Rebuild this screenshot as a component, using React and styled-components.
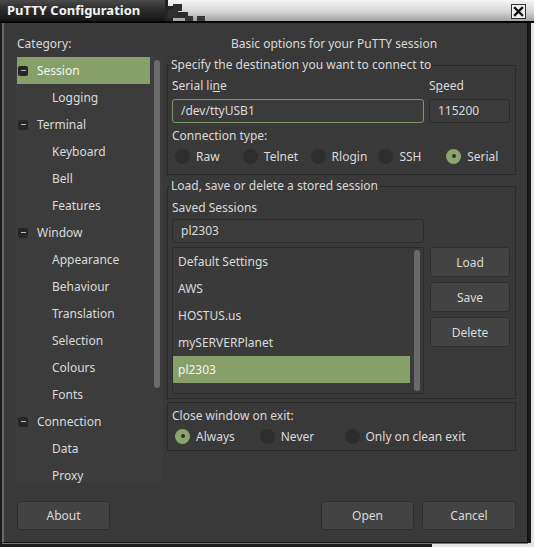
import styled, { createGlobalStyle } from "styled-components";

const GlobalStyle = createGlobalStyle`
  * { box-sizing: border-box; }
  html, body { margin: 0; padding: 0; background: #1e1e1e; }
  body {
    font-family: "Noto Sans", "DejaVu Sans", sans-serif;
    font-size: 12px;
    color: #dadada;
  }
`;

const treeItems = [
  { label: "Session", top: true, selected: true },
  { label: "Logging" },
  { label: "Terminal", top: true },
  { label: "Keyboard" },
  { label: "Bell" },
  { label: "Features" },
  { label: "Window", top: true },
  { label: "Appearance" },
  { label: "Behaviour" },
  { label: "Translation" },
  { label: "Selection" },
  { label: "Colours" },
  { label: "Fonts" },
  { label: "Connection", top: true },
  { label: "Data" },
  { label: "Proxy" },
];

const sessions = ["Default Settings", "AWS", "HOSTUS.us", "mySERVERPlanet", "pl2303"];

function Radio({ checked, label, span }) {
  return (
    <RadioItem $span={span}>
      <RadioDot $checked={checked} />
      <span>{label}</span>
    </RadioItem>
  );
}

function Checker() {
  return (
    <svg width="40" height="21" viewBox="0 0 40 21">
      <rect x="0" y="0" width="3" height="21" fill="#202020" />
      <rect x="0" y="6" width="8" height="15" fill="#262626" />
      <rect x="8" y="4" width="9" height="7" fill="#2e2e2e" />
      <rect x="3" y="10" width="10" height="8" fill="#303030" />
      <rect x="12" y="12" width="11" height="6" fill="#2a2a2a" />
      <rect x="20" y="16" width="8" height="5" fill="#333" />
      <rect x="32" y="16" width="8" height="5" fill="#383838" />
    </svg>
  );
}

function CloseIcon() {
  return (
    <svg width="15" height="15" viewBox="0 0 15 15">
      <rect x="0.5" y="0.5" width="14" height="14" fill="#f2f2f2" stroke="#333" />
      <path d="M4 4 L11 11 M11 4 L4 11" stroke="#111" strokeWidth="2.4" strokeLinecap="square" />
    </svg>
  );
}

export default function App() {
  return (
    <>
      <GlobalStyle />
      <Window>
        <TitleBar>
          <TitleTab>PuTTY Configuration</TitleTab>
          <Checker />
          <TitleFill>
            <CloseIcon />
          </TitleFill>
        </TitleBar>

        <Body>
          <Main>
            <LeftColumn>
              <Caption>
                Cate<u>g</u>ory:
              </Caption>
              <Tree>
                <TreeList>
                  {treeItems.map((item) => (
                    <TreeRow key={item.label} $top={item.top} $selected={item.selected}>
                      {item.top && <Expander />}
                      {item.label}
                    </TreeRow>
                  ))}
                </TreeList>
                <ScrollTrack $pad={3}>
                  <ScrollThumb style={{ height: 328 }} />
                </ScrollTrack>
              </Tree>
            </LeftColumn>

            <RightColumn>
              <Header>Basic options for your PuTTY session</Header>

              <Group>
                <Legend>Specify the destination you want to connect to</Legend>
                <FieldGrid>
                  <FieldLabel>
                    Serial li<u>n</u>e
                  </FieldLabel>
                  <FieldLabel>
                    S<u>p</u>eed
                  </FieldLabel>
                  <TextBox $focused>/dev/ttyUSB1</TextBox>
                  <TextBox>115200</TextBox>
                </FieldGrid>
                <FieldLabel $gap={4}>Connection type:</FieldLabel>
                <RadioRow $cols={5}>
                  <Radio label="Raw" />
                  <Radio label="Telnet" />
                  <Radio label="Rlogin" />
                  <Radio label="SSH" />
                  <Radio label="Serial" checked />
                </RadioRow>
              </Group>

              <Group $gapTop={3} $padBottom={4}>
                <Legend>Load, save or delete a stored session</Legend>
                <FieldLabel $gap={5}>Saved Sessions</FieldLabel>
                <SessionInput>pl2303</SessionInput>
                <SessionRow>
                  <ListBox>
                    <ListItems>
                      {sessions.map((s) => (
                        <ListItem key={s} $selected={s === "pl2303"}>
                          {s}
                        </ListItem>
                      ))}
                    </ListItems>
                    <ScrollTrack $pad={2}>
                      <ScrollThumb style={{ height: 141 }} />
                    </ScrollTrack>
                  </ListBox>
                  <ButtonColumn>
                    <SideButton>Load</SideButton>
                    <SideButton>Save</SideButton>
                    <SideButton>Delete</SideButton>
                  </ButtonColumn>
                </SessionRow>
              </Group>

              <Group $gapTop={3} $padTop={4} $padBottom={5}>
                <FieldLabel>Close window on exit:</FieldLabel>
                <RadioRow $cols={4}>
                  <Radio label="Always" checked />
                  <Radio label="Never" />
                  <Radio label="Only on clean exit" span={2} />
                </RadioRow>
              </Group>
            </RightColumn>
          </Main>

          <Footer>
            <DialogButton>About</DialogButton>
            <FooterRight>
              <DialogButton>Open</DialogButton>
              <DialogButton $wide>Cancel</DialogButton>
            </FooterRight>
          </Footer>
        </Body>
      </Window>
    </>
  );
}

const Window = styled.div`
  width: 534px;
  height: 547px;
  display: flex;
  flex-direction: column;
  background: linear-gradient(to right, #1c1c1c 0, #1c1c1c 432px, #e4e4e4 432px);
  overflow: hidden;
`;

const TitleBar = styled.div`
  height: 23px;
  flex: none;
  display: flex;
  border-bottom: 2px solid #050505;
  background: linear-gradient(#f6f6f6 0%, #d6d6d6 55%, #a2a2a2 100%);
`;

const TitleTab = styled.div`
  width: 165px;
  padding-left: 7px;
  line-height: 21px;
  font-size: 13px;
  font-weight: 700;
  color: #f4f4f4;
  background: linear-gradient(#4a4a4a 0%, #2c2c2c 45%, #171717 100%);
`;

const TitleFill = styled.div`
  flex: 1;
  display: flex;
  justify-content: flex-end;
  align-items: flex-start;
  padding: 4px 8px 0 0;
`;

const Body = styled.div`
  flex: 1;
  min-height: 0;
  display: flex;
  flex-direction: column;
  margin: 0 6px 4px 2px;
  background: #393939;
  border-left: 2px solid #6c6c6c;
  border-right: 1px solid #101010;
  border-bottom: 1px solid #101010;
  box-shadow: 3px 0 0 #1a1a1a, 0 1px 0 #777;
  padding: 11px 11px 12px 12px;
`;

const Main = styled.div`
  flex: 1;
  display: flex;
  gap: 4px;
  min-height: 0;
`;

const LeftColumn = styled.div`
  width: 147px;
  min-height: 0;
  display: flex;
  flex-direction: column;
  overflow: hidden;
`;

const Caption = styled.div`
  line-height: 20px;
  margin: 0 0 3px 1px;
`;

const Tree = styled.div`
  flex: 1;
  min-height: 0;
  display: flex;
  background: #3c3c3c;
  padding-left: 1px;
  overflow: hidden;
`;

const TreeList = styled.div`
  flex: 1;
  overflow: hidden;
`;

const TreeRow = styled.div`
  height: 27px;
  display: flex;
  align-items: center;
  gap: 9px;
  padding-left: ${(p) => (p.$top ? "1px" : "35px")};
  background: ${(p) => (p.$selected ? "#87a06a" : "transparent")};
  color: ${(p) => (p.$selected ? "#f4f4f4" : "#dadada")};
  white-space: nowrap;
`;

const Expander = styled.span`
  width: 10px;
  height: 10px;
  border-radius: 2px;
  background: #262626;
  display: flex;
  align-items: center;
  justify-content: center;

  &::before {
    content: "";
    width: 5px;
    height: 1px;
    background: #bdbdbd;
  }
`;

const ScrollTrack = styled.div`
  width: 13px;
  flex: none;
  padding: ${(p) => p.$pad}px 3px 0 4px;
`;

const ScrollThumb = styled.div`
  width: 6px;
  border-radius: 3px;
  background: #6a6a6a;
`;

const RightColumn = styled.div`
  flex: 1;
  display: flex;
  flex-direction: column;
`;

const Header = styled.div`
  line-height: 20px;
  text-align: center;
  padding-right: 15px;
  margin-bottom: 3px;
`;

const Group = styled.fieldset`
  margin: ${(p) => p.$gapTop || 0}px 0 0 0;
  padding: ${(p) => p.$padTop || 0}px 4px ${(p) => (p.$padBottom === undefined ? 9 : p.$padBottom)}px;
  border: 1px solid #2a2a2a;
  min-width: 0;
`;

const Legend = styled.legend`
  padding: 0;
  margin-left: -1px;
  line-height: 16px;
`;

const FieldGrid = styled.div`
  display: grid;
  grid-template-columns: 252px 81px;
  column-gap: 5px;
  row-gap: 4px;
  margin-top: 4px;
`;

const FieldLabel = styled.div`
  line-height: 18px;
  margin-top: ${(p) => p.$gap || 0}px;
`;

const TextBox = styled.div`
  height: 24px;
  line-height: 22px;
  padding-left: 8px;
  border-radius: 3px;
  background: #3b3b3b;
  border: 1px solid ${(p) => (p.$focused ? "#7f9769" : "#2b2b2b")};
`;

const SessionInput = styled(TextBox)`
  width: 252px;
  margin-top: 2px;
`;

const RadioRow = styled.div`
  display: grid;
  grid-template-columns: repeat(${(p) => p.$cols}, 1fr);
  margin-top: 2px;
  height: 18px;
`;

const RadioItem = styled.label`
  display: flex;
  align-items: center;
  gap: 6px;
  padding-left: 3px;
  white-space: nowrap;
  grid-column: span ${(p) => p.$span || 1};
`;

const RadioDot = styled.span`
  width: 15px;
  height: 15px;
  flex: none;
  border-radius: 50%;
  background: ${(p) => (p.$checked ? "#8aa46e" : "#2d2d2d")};
  display: flex;
  align-items: center;
  justify-content: center;

  &::before {
    content: "";
    width: 4px;
    height: 4px;
    border-radius: 50%;
    background: ${(p) => (p.$checked ? "#2f2f2f" : "transparent")};
  }
`;

const SessionRow = styled.div`
  display: flex;
  gap: 6px;
  margin-top: 4px;
`;

const ListBox = styled.div`
  width: 252px;
  height: 147px;
  display: flex;
  border: 1px solid #2b2b2b;
  background: #3a3a3a;
`;

const ListItems = styled.div`
  flex: 1;
`;

const ListItem = styled.div`
  height: 27px;
  line-height: 27px;
  padding-left: 5px;
  background: ${(p) => (p.$selected ? "#87a06a" : "transparent")};
  color: ${(p) => (p.$selected ? "#f4f4f4" : "#dadada")};
`;

const ButtonColumn = styled.div`
  display: flex;
  flex-direction: column;
  gap: 5px;
`;

const ButtonBase = styled.button`
  font: inherit;
  color: #dadada;
  background: #434343;
  border: 1px solid #2e2e2e;
  border-radius: 3px;
  padding: 0;
  cursor: pointer;
`;

const SideButton = styled(ButtonBase)`
  width: 80px;
  height: 30px;
`;

const Footer = styled.div`
  display: flex;
  justify-content: space-between;
  margin-top: 18px;
  padding-left: 1px;
`;

const FooterRight = styled.div`
  display: flex;
  gap: 8px;
`;

const DialogButton = styled(ButtonBase)`
  width: ${(p) => (p.$wide ? 94 : 93)}px;
  height: 29px;
`;
